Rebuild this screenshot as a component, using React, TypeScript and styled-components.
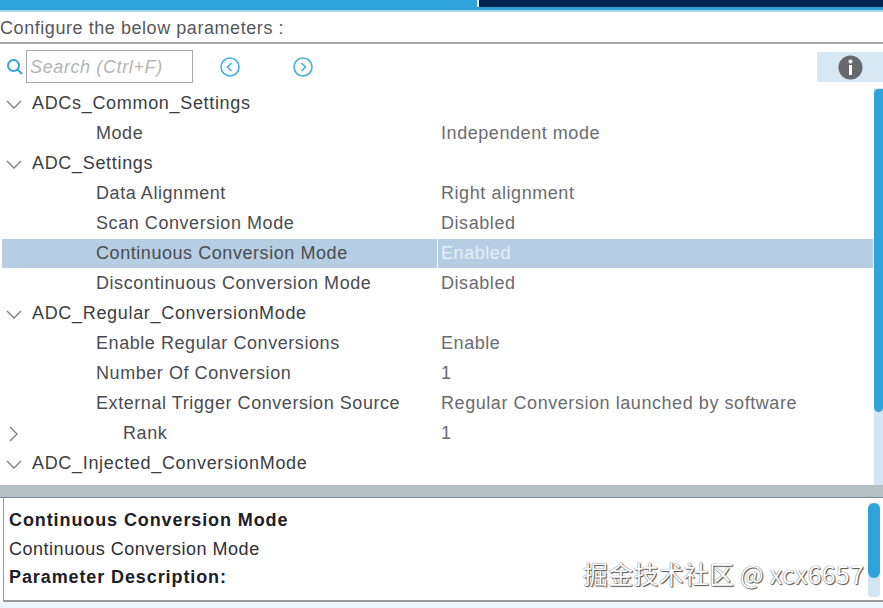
import React from "react";
import styled, { createGlobalStyle } from "styled-components";

const Global = createGlobalStyle`
  html, body { margin: 0; padding: 0; background: #fff; }
  * { box-sizing: border-box; }
  #root { width: 883px; height: 608px; overflow: hidden; }
`;

const Page = styled.div`
  position: relative;
  width: 883px;
  height: 608px;
  display: flex;
  flex-direction: column;
  background: #fff;
  font-family: "Liberation Sans", Arial, sans-serif;
  color: #46484c;
  overflow: hidden;
`;

const TabBar = styled.div`
  height: 7px;
  display: flex;
  flex: none;
`;
const ActiveTab = styled.div`
  width: 477px;
  background: #2fa4da;
`;
const InactiveTab = styled.div`
  flex: 1;
  background: #03234f;
  border-left: 2px solid #eaf4fa;
`;
const TabRule = styled.div`
  height: 5px;
  flex: none;
  background: #2d9fd6;
  border-bottom: 2px solid #a5d6ee;
`;
const HeaderRow = styled.div`
  flex: none;
  height: 32px;
  display: flex;
  align-items: center;
  padding-top: 2px;
  font-size: 18px;
  letter-spacing: 0.56px;
  color: #55575b;
  border-bottom: 2px solid #a9a9a9;
`;
const Toolbar = styled.div`
  flex: none;
  height: 44px;
  display: flex;
  align-items: center;
  padding-left: 6px;
  padding-top: 2px;
`;
const SearchBox = styled.div`
  width: 167px;
  height: 33px;
  margin: 0 0 2px 2px;
  border: 1px solid #a8a8a8;
  display: flex;
  align-items: center;
  padding: 2px 0 0 3px;
  font-size: 18px;
  letter-spacing: 0.62px;
  font-style: italic;
  color: #b4b4b4;
`;
const NavButton = styled.button<{ $gap: number }>`
  border: 0;
  padding: 0;
  background: none;
  margin-left: ${(p) => p.$gap}px;
  width: 22px;
  height: 22px;
  display: flex;
`;
const InfoBox = styled.div`
  margin-left: auto;
  width: 66px;
  height: 30px;
  background: #d8e7f4;
  display: flex;
  align-items: center;
  padding-left: 21px;
`;
const TreeArea = styled.div`
  position: relative;
  flex: none;
  height: 397px;
  padding: 1px 10px 0 2px;
`;
const Row = styled.div<{ $selected?: boolean }>`
  height: 30px;
  display: flex;
  align-items: center;
  border-bottom: 1px solid transparent;
  background-clip: padding-box;
  font-size: 18px;
  letter-spacing: 0.56px;
  background-color: ${(p) => (p.$selected ? "#b5cee4" : "transparent")};
`;
const Toggle = styled.div`
  width: 30px;
  flex: none;
  display: flex;
  padding-left: 4px;
  padding-top: 1px;
`;
const Group = styled.div`
  color: #3b3d42;
  letter-spacing: 0.68px;
`;
const Name = styled.div<{ $indent: number }>`
  width: 405px;
  flex: none;
  padding-left: ${(p) => p.$indent}px;
  color: #4a4c50;
`;
const Value = styled.div<{ $selected?: boolean }>`
  align-self: stretch;
  flex: 1;
  display: flex;
  align-items: center;
  padding-left: 3px;
  color: ${(p) => (p.$selected ? "#e6eef6" : "#6a6c70")};
  border-left: ${(p) => (p.$selected ? "1px solid #fff" : "1px solid transparent")};
`;
const Scrollbar = styled.div`
  position: absolute;
  right: 0;
  top: 0;
  bottom: 0;
  width: 9px;
  background: #d5e4f3;
`;
const ScrollThumb = styled.div`
  height: 323px;
  margin-top: 1px;
  background: #2fa4da;
  border-radius: 5px 0 5px 5px;
`;
const Splitter = styled.div`
  flex: none;
  height: 13px;
  background: #b4c0c4;
  border-bottom: 1px solid #7d8a96;
`;
const Details = styled.div`
  position: relative;
  flex: none;
  height: 104px;
  margin-left: 3px;
  padding: 8px 0 0 5px;
  font-size: 18px;
  border-left: 1px solid #9a9a9a;
  border-bottom: 2px solid #9a9a9a;
  line-height: 28.5px;
  color: #2e3036;
`;
const DetailBold = styled.div`
  font-weight: 700;
  letter-spacing: 0.9px;
  color: #1d2027;
`;
const DetailText = styled.div`
  letter-spacing: 0.52px;
`;
const DetailScrollTrack = styled.div`
  position: absolute;
  right: 3px;
  top: 5px;
  bottom: 3px;
  width: 12px;
  background: #d5e4f3;
  border-radius: 3px;
`;
const DetailScrollThumb = styled.div`
  height: 75px;
  border-radius: 6px;
  background: #2fa4da;
`;
const Watermark = styled.div`
  position: absolute;
  right: 19px;
  top: 558px;
  font-family: "Noto Sans CJK SC", "Liberation Sans", sans-serif;
  font-size: 25px;
  letter-spacing: 0.2px;
  line-height: 30px;
  color: #fff;
  text-shadow: 0 0 1px #333, 1px 1px 1px #555;
`;
const BottomStrip = styled.div`
  flex: 1;
  background: #eef6fb;
`;

const Chevron = ({ open }: { open: boolean }) => (
  <svg width="16" height="16" viewBox="0 0 16 16" fill="none" stroke="#7a7c80" strokeWidth="1.3">
    {open ? <path d="M1 5 L8 12 L15 5" /> : <path d="M4 1 L11 8 L4 15" />}
  </svg>
);

const rows: { kind: "group" | "item"; label: string; value?: string; selected?: boolean; indent?: number; closed?: boolean }[] = [
  { kind: "group", label: "ADCs_Common_Settings" },
  { kind: "item", label: "Mode", value: "Independent mode" },
  { kind: "group", label: "ADC_Settings" },
  { kind: "item", label: "Data Alignment", value: "Right alignment" },
  { kind: "item", label: "Scan Conversion Mode", value: "Disabled" },
  { kind: "item", label: "Continuous Conversion Mode", value: "Enabled", selected: true },
  { kind: "item", label: "Discontinuous Conversion Mode", value: "Disabled" },
  { kind: "group", label: "ADC_Regular_ConversionMode" },
  { kind: "item", label: "Enable Regular Conversions", value: "Enable" },
  { kind: "item", label: "Number Of Conversion", value: "1" },
  { kind: "item", label: "External Trigger Conversion Source", value: "Regular Conversion launched by software" },
  { kind: "item", label: "Rank", value: "1", indent: 91, closed: true },
  { kind: "group", label: "ADC_Injected_ConversionMode" },
];

export default function App() {
  return (
    <Page>
      <Global />
      <TabBar>
        <ActiveTab />
        <InactiveTab />
      </TabBar>
      <TabRule />
      <HeaderRow>Configure the below parameters :</HeaderRow>
      <Toolbar>
        <svg width="18" height="18" viewBox="0 0 18 18" fill="none" stroke="#35a3d6" strokeWidth="2">
          <circle cx="7.5" cy="7.5" r="5.5" />
          <path d="M11.5 11.5 L16 16" />
        </svg>
        <SearchBox>Search (Ctrl+F)</SearchBox>
        <NavButton $gap={26} aria-label="previous">
          <svg width="22" height="22" viewBox="0 0 22 22" fill="none" stroke="#45aede" strokeWidth="1.6">
            <circle cx="11" cy="11" r="9" />
            <path d="M12.5 7 L8.5 11 L12.5 15" />
          </svg>
        </NavButton>
        <NavButton $gap={51} aria-label="next">
          <svg width="22" height="22" viewBox="0 0 22 22" fill="none" stroke="#45aede" strokeWidth="1.6">
            <circle cx="11" cy="11" r="9" />
            <path d="M9.5 7 L13.5 11 L9.5 15" />
          </svg>
        </NavButton>
        <InfoBox>
          <svg width="25" height="25" viewBox="0 0 25 25">
            <circle cx="12.5" cy="12.5" r="12" fill="#66686c" />
            <circle cx="12.5" cy="6.5" r="2" fill="#fff" />
            <rect x="11" y="10" width="3" height="10" fill="#fff" />
          </svg>
        </InfoBox>
      </Toolbar>
      <TreeArea>
        {rows.map((r) =>
          r.kind === "group" ? (
            <Row key={r.label}>
              <Toggle>
                <Chevron open />
              </Toggle>
              <Group>{r.label}</Group>
            </Row>
          ) : (
            <Row key={r.label} $selected={r.selected}>
              <Toggle>{r.closed ? <Chevron open={false} /> : null}</Toggle>
              <Name $indent={r.indent ?? 64}>{r.label}</Name>
              <Value $selected={r.selected}>{r.value}</Value>
            </Row>
          )
        )}
        <Scrollbar>
          <ScrollThumb />
        </Scrollbar>
      </TreeArea>
      <Splitter />
      <Details>
        <DetailBold>Continuous Conversion Mode</DetailBold>
        <DetailText>Continuous Conversion Mode</DetailText>
        <DetailBold>Parameter Description:</DetailBold>
        <DetailScrollTrack>
          <DetailScrollThumb />
        </DetailScrollTrack>
      </Details>
      <BottomStrip />
      <Watermark>掘金技术社区 @ xcx6657</Watermark>
    </Page>
  );
}
